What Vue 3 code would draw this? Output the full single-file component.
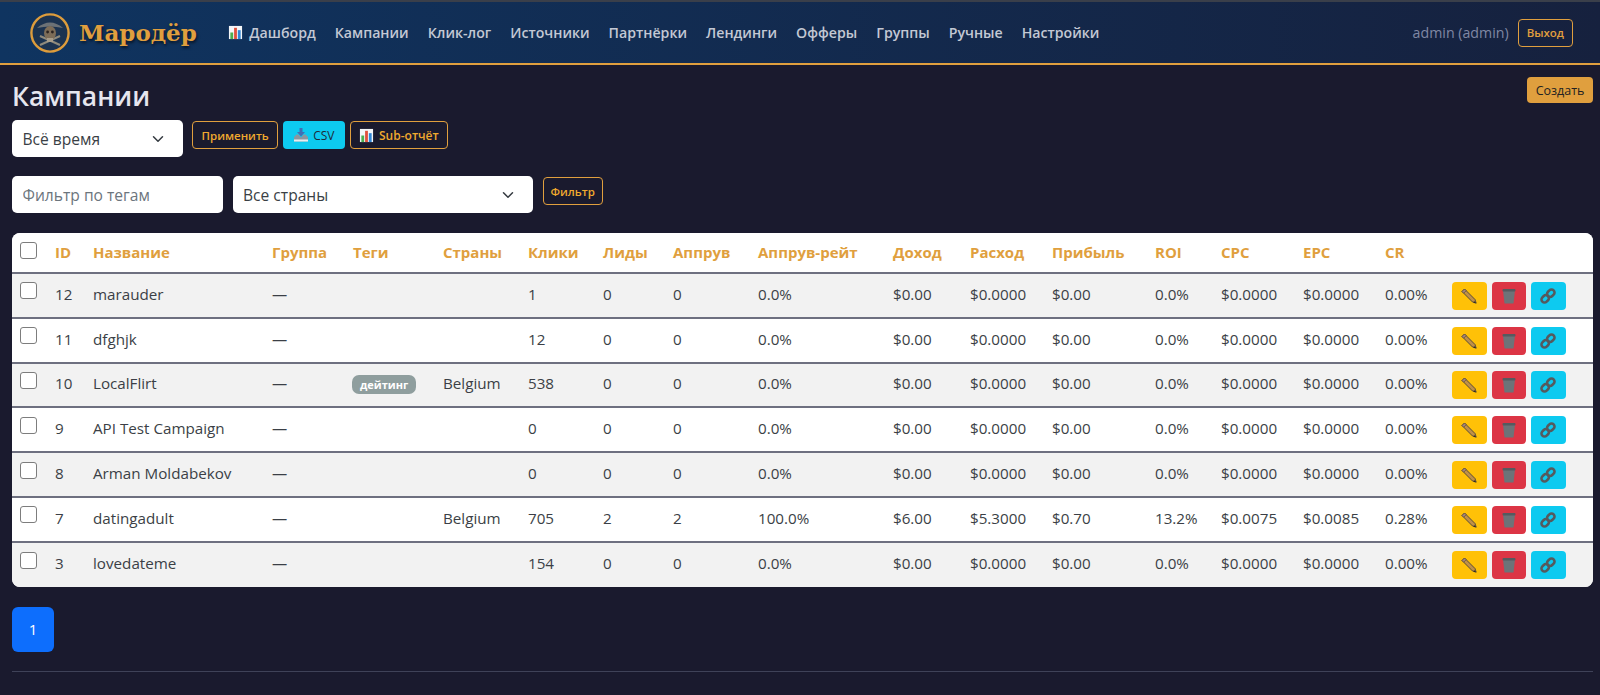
<template>
  <nav class="navbar">
    <div class="brand">
      <svg class="logo" viewBox="0 0 40 40">
        <circle cx="20" cy="20" r="18.6" fill="#1c3350" stroke="#dd9c3c" stroke-width="2.4" />
        <g class="logo-art">
          <path d="M10 32 L30 23 M10 23 L30 32" stroke="#8f8a7c" stroke-width="2.2" />
          <path d="M7 15 Q20 4 33 15 Q20 12 7 15Z" fill="#6d7276" />
          <ellipse cx="20" cy="20" rx="6" ry="7" fill="#7d6d58" />
          <rect x="17" y="25" width="6" height="4" fill="#a89c88" />
          <circle cx="17.6" cy="19" r="1.4" fill="#2b2320" />
          <circle cx="22.4" cy="19" r="1.4" fill="#2b2320" />
        </g>
      </svg>
      <span class="brand-name">Мародёр</span>
    </div>
    <ul class="nav-links">
      <li v-for="link in navLinks" :key="link" class="nav-link">
        <svg v-if="link === 'Дашборд'" class="chart-icon" viewBox="0 0 16 16">
          <rect x="1" y="1" width="14" height="14" fill="#f4f6f8" />
          <rect x="2.5" y="8" width="3" height="7" fill="#4caf50" />
          <rect x="6.5" y="3" width="3" height="12" fill="#e0503c" />
          <rect x="10.5" y="5.5" width="3" height="9.5" fill="#2f86d6" />
        </svg>
        {{ link }}
      </li>
    </ul>
    <div class="user-box">
      <span class="user-name">admin (admin)</span>
      <button class="btn-outline btn-logout">Выход</button>
    </div>
  </nav>

  <main class="content">
    <div class="title-row">
      <h1 class="page-title">Кампании</h1>
      <button class="btn-create">Создать</button>
    </div>

    <div class="toolbar toolbar-period">
      <select class="field field-period">
        <option>Всё время</option>
      </select>
      <button class="btn-outline btn-apply">Применить</button>
      <button class="btn-csv">
        <svg class="tray-icon" viewBox="0 0 16 16">
          <path d="M6.5 1 H9.5 V5 H12 L8 9.5 L4 5 H6.5Z" fill="#3f6fb5" />
          <path d="M1 10 L3.5 7.5 H5.5 L8 10.5 L10.5 7.5 H12.5 L15 10 V14.5 H1Z" fill="#8a96a0" />
          <rect x="1" y="12.5" width="14" height="2" fill="#e8edf0" />
        </svg>
        CSV
      </button>
      <button class="btn-outline btn-sub">
        <svg class="chart-icon" viewBox="0 0 16 16">
          <rect x="1" y="1" width="14" height="14" fill="#f4f6f8" />
          <rect x="2.5" y="8" width="3" height="7" fill="#4caf50" />
          <rect x="6.5" y="3" width="3" height="12" fill="#e0503c" />
          <rect x="10.5" y="5.5" width="3" height="9.5" fill="#2f86d6" />
        </svg>
        Sub-отчёт
      </button>
    </div>

    <div class="toolbar toolbar-filter">
      <input class="field field-tags" type="text" placeholder="Фильтр по тегам" />
      <select class="field field-country">
        <option>Все страны</option>
      </select>
      <button class="btn-outline btn-filter">Фильтр</button>
    </div>

    <div class="table-wrap">
      <table class="campaigns">
        <colgroup>
          <col v-for="(w, i) in colWidths" :key="i" :style="{ width: w + 'px' }" />
        </colgroup>
        <thead>
          <tr>
            <th><span class="check"></span></th>
            <th v-for="h in headers" :key="h">{{ h }}</th>
            <th></th>
          </tr>
        </thead>
        <tbody>
          <tr v-for="row in campaigns" :key="row.id">
            <td><span class="check"></span></td>
            <td>{{ row.id }}</td>
            <td>{{ row.name }}</td>
            <td>—</td>
            <td><span v-if="row.tag" class="tag">{{ row.tag }}</span></td>
            <td>{{ row.country }}</td>
            <td>{{ row.clicks }}</td>
            <td>{{ row.leads }}</td>
            <td>{{ row.approved }}</td>
            <td>{{ row.rate }}</td>
            <td>{{ row.income }}</td>
            <td>{{ row.expense }}</td>
            <td>{{ row.profit }}</td>
            <td>{{ row.roi }}</td>
            <td>{{ row.cpc }}</td>
            <td>{{ row.epc }}</td>
            <td>{{ row.cr }}</td>
            <td>
              <div class="actions">
                <button class="act act-edit">
                  <svg viewBox="0 0 16 16">
                    <path d="M1 3.5 L3.5 1 L14 11.5 L15.2 15.2 L11.5 14 Z" fill="#c09048" stroke="#4a423a" stroke-width="0.9" />
                    <path d="M1 3.5 L3.5 1 L5.2 2.7 L2.7 5.2 Z" fill="#a8857a" stroke="#4a423a" stroke-width="0.6" />
                    <path d="M13 13 L15.2 15.2 L12.6 14.4 Z" fill="#222" />
                  </svg>
                </button>
                <button class="act act-delete">
                  <svg viewBox="0 0 16 16">
                    <path d="M2 2.5 H14 L12.5 15.5 H3.5 Z" fill="#6d7378" />
                    <rect x="1.5" y="1" width="13" height="2.5" rx="1" fill="#555a5f" />
                  </svg>
                </button>
                <button class="act act-link">
                  <svg viewBox="0 0 16 16" fill="none" stroke="#555a5e" stroke-width="2.6">
                    <rect x="1.2" y="7.8" width="8" height="6" rx="3" transform="rotate(-45 5.2 10.8)" />
                    <rect x="6.8" y="2.2" width="8" height="6" rx="3" transform="rotate(-45 10.8 5.2)" />
                  </svg>
                </button>
              </div>
            </td>
          </tr>
        </tbody>
      </table>
    </div>

    <div class="pagination">
      <span class="page-item">1</span>
    </div>
    <hr class="divider" />
  </main>
</template>

<script setup>
const navLinks = ['Дашборд', 'Кампании', 'Клик-лог', 'Источники', 'Партнёрки', 'Лендинги', 'Офферы', 'Группы', 'Ручные', 'Настройки']

const headers = ['ID', 'Название', 'Группа', 'Теги', 'Страны', 'Клики', 'Лиды', 'Аппрув', 'Аппрув-рейт', 'Доход', 'Расход', 'Прибыль', 'ROI', 'CPC', 'EPC', 'CR']

const colWidths = [35, 38, 179, 81, 90, 85, 75, 70, 85, 135, 77, 82, 103, 66, 82, 82, 67, 149]

const empty = {
  tag: '', country: '', clicks: 0, leads: 0, approved: 0, rate: '0.0%', income: '$0.00', expense: '$0.0000',
  profit: '$0.00', roi: '0.0%', cpc: '$0.0000', epc: '$0.0000', cr: '0.00%'
}

const campaigns = [
  { ...empty, id: 12, name: 'marauder', clicks: 1 },
  { ...empty, id: 11, name: 'dfghjk', clicks: 12 },
  { ...empty, id: 10, name: 'LocalFlirt', tag: 'дейтинг', country: 'Belgium', clicks: 538 },
  { ...empty, id: 9, name: 'API Test Campaign' },
  { ...empty, id: 8, name: 'Arman Moldabekov' },
  {
    ...empty, id: 7, name: 'datingadult', country: 'Belgium', clicks: 705, leads: 2, approved: 2, rate: '100.0%',
    income: '$6.00', expense: '$5.3000', profit: '$0.70', roi: '13.2%', cpc: '$0.0075', epc: '$0.0085', cr: '0.28%'
  },
  { ...empty, id: 3, name: 'lovedateme', clicks: 154 }
]
</script>

<style>
html, body {
  margin: 0;
  background: #1a1a2e;
}
</style>

<style scoped>
.navbar {
  display: flex;
  align-items: center;
  height: 65px;
  box-sizing: border-box;
  padding: 0 27px 0 30px;
  background: linear-gradient(90deg, #0f3460 0%, #16213e 100%);
  border-top: 2px solid #3a3f4a;
  border-bottom: 2px solid #e09f3e;
  font-family: "Open Sans", "Noto Sans", sans-serif;
}

.brand {
  display: flex;
  align-items: center;
  gap: 9px;
}

.logo {
  width: 40px;
  height: 40px;
}

.logo-art {
  filter: blur(0.5px);
}

.brand-name {
  font-family: "DejaVu Serif", "Liberation Serif", serif;
  font-weight: 700;
  font-size: 23px;
  color: #e09f3e;
  text-shadow: 1px 2px 3px rgba(0, 0, 0, 0.6);
}

.nav-links {
  display: flex;
  align-items: center;
  list-style: none;
  margin: 0 0 0 22px;
  padding: 0;
}

.nav-link {
  display: flex;
  align-items: center;
  gap: 6px;
  padding: 0 9.5px;
  font-size: 14.15px;
  font-weight: 600;
  color: #c3c8d4;
}

.chart-icon {
  width: 15px;
  height: 15px;
  flex-shrink: 0;
}

.user-box {
  margin-left: auto;
  display: flex;
  align-items: center;
  gap: 9px;
}

.user-name {
  font-size: 14.2px;
  color: #8088a4;
}

button {
  font-family: "Open Sans", "Noto Sans", sans-serif;
  cursor: pointer;
}

.btn-outline {
  display: inline-flex;
  align-items: center;
  gap: 4px;
  height: 28px;
  padding: 0 8px;
  background: transparent;
  border: 1.5px solid #e09f3e;
  border-radius: 4px;
  color: #f0a92e;
  font-size: 11.5px;
  font-weight: 600;
}

.btn-logout {
  color: #e09f3e;
}

.btn-apply {
  padding: 0 8.5px;
}

.btn-sub {
  padding: 0 8.5px;
  gap: 5px;
  font-size: 12px;
}

.btn-filter {
  padding: 0 7px;
}

.content {
  padding: 12px 7px 0 12px;
  font-family: "Open Sans", "Noto Sans", sans-serif;
}

.title-row {
  display: flex;
  justify-content: space-between;
  align-items: flex-start;
  height: 43px;
}

.page-title {
  margin: 0;
  font-size: 26.4px;
  font-weight: 600;
  line-height: 38px;
  color: #e6e6ee;
}

.btn-create {
  height: 26px;
  padding: 0 8.5px;
  background: #e09f3e;
  border: none;
  border-radius: 4px;
  color: #222;
  font-size: 12.5px;
}

.toolbar {
  display: flex;
  align-items: flex-start;
}

.toolbar-period {
  gap: 5px;
  height: 56px;
}

.toolbar-filter {
  height: 57px;
  gap: 10px;
}

.toolbar .btn-outline,
.btn-csv {
  margin-top: 1px;
}

.field {
  box-sizing: border-box;
  height: 37px;
  padding: 0 10.5px;
  border: none;
  border-radius: 5px;
  background-color: #fff;
  color: #3a3f45;
  font-family: "Open Sans", "Noto Sans", sans-serif;
  font-size: 15.6px;
  outline: none;
}

.field::placeholder {
  color: #6c757d;
  opacity: 1;
}

select.field {
  appearance: none;
  background-image: url("data:image/svg+xml,%3csvg xmlns='http://www.w3.org/2000/svg' viewBox='0 0 16 16'%3e%3cpath fill='none' stroke='%23343a40' stroke-linecap='round' stroke-linejoin='round' stroke-width='2' d='m2 5 6 6 6-6'/%3e%3c/svg%3e");
  background-repeat: no-repeat;
  background-position: right 17px center;
  background-size: 16px 12px;
}

.field-period {
  width: 171px;
  margin-right: 4px;
}

.field-tags {
  width: 210.5px;
}

.field-country {
  width: 300px;
}

.btn-csv {
  display: inline-flex;
  align-items: center;
  gap: 4px;
  height: 28px;
  padding: 0 10px;
  background: #0dcaf0;
  border: none;
  border-radius: 4px;
  color: #1d2b3a;
  font-size: 12px;
}

.tray-icon {
  width: 16px;
  height: 16px;
}

.table-wrap {
  border-radius: 8px;
  overflow: hidden;
  background: #fff;
}

.campaigns {
  width: 1581px;
  table-layout: fixed;
  border-collapse: separate;
  border-spacing: 0;
  font-size: 15.2px;
  color: #3b3f46;
}

.campaigns th {
  height: 41px;
  box-sizing: border-box;
  padding: 0 8px 2px;
  text-align: left;
  font-weight: 700;
  font-size: 15px;
  color: #e09f3e;
  background: #fff;
  border-bottom: 2px solid #6e7080;
  white-space: nowrap;
}

.campaigns td {
  height: 44.8px;
  box-sizing: border-box;
  padding: 0 8px 3px;
  vertical-align: middle;
  border-bottom: 2px solid #6e7080;
  white-space: nowrap;
}

.campaigns tbody tr:nth-child(odd) td {
  background: #f2f2f2;
}

.campaigns tbody tr:last-child td {
  height: 44px;
  border-bottom: none;
}

.check {
  display: block;
  width: 15px;
  height: 15px;
  border: 1px solid #7d7d7d;
  border-radius: 3px;
  background: #fff;
  margin-top: -6px;
}

.campaigns th .check {
  margin-top: -3px;
}

.tag {
  display: inline-block;
  padding: 2px 8px;
  border-radius: 7px;
  background: #8f9e9e;
  color: #fff;
  font-size: 11px;
  font-weight: 700;
  line-height: 15px;
  margin-left: -1px;
}

.actions {
  display: flex;
  gap: 5px;
  margin-top: 4px;
}

.act {
  display: flex;
  align-items: center;
  justify-content: center;
  width: 34.5px;
  height: 28px;
  padding: 0;
  border: none;
  border-radius: 4px;
}

.act svg {
  width: 16px;
  height: 16px;
}

.act-edit {
  background: #ffc107;
}

.act-delete {
  background: #dc3545;
}

.act-link {
  background: #0dcaf0;
}

.pagination {
  display: flex;
  margin-top: 20px;
}

.page-item {
  display: flex;
  align-items: center;
  justify-content: center;
  width: 42px;
  height: 45px;
  border-radius: 6px;
  background: #0d6efd;
  color: #fff;
  font-size: 15px;
}

.divider {
  margin: 19px 0 0;
  border: none;
  border-top: 1px solid #3f4258;
}
</style>
